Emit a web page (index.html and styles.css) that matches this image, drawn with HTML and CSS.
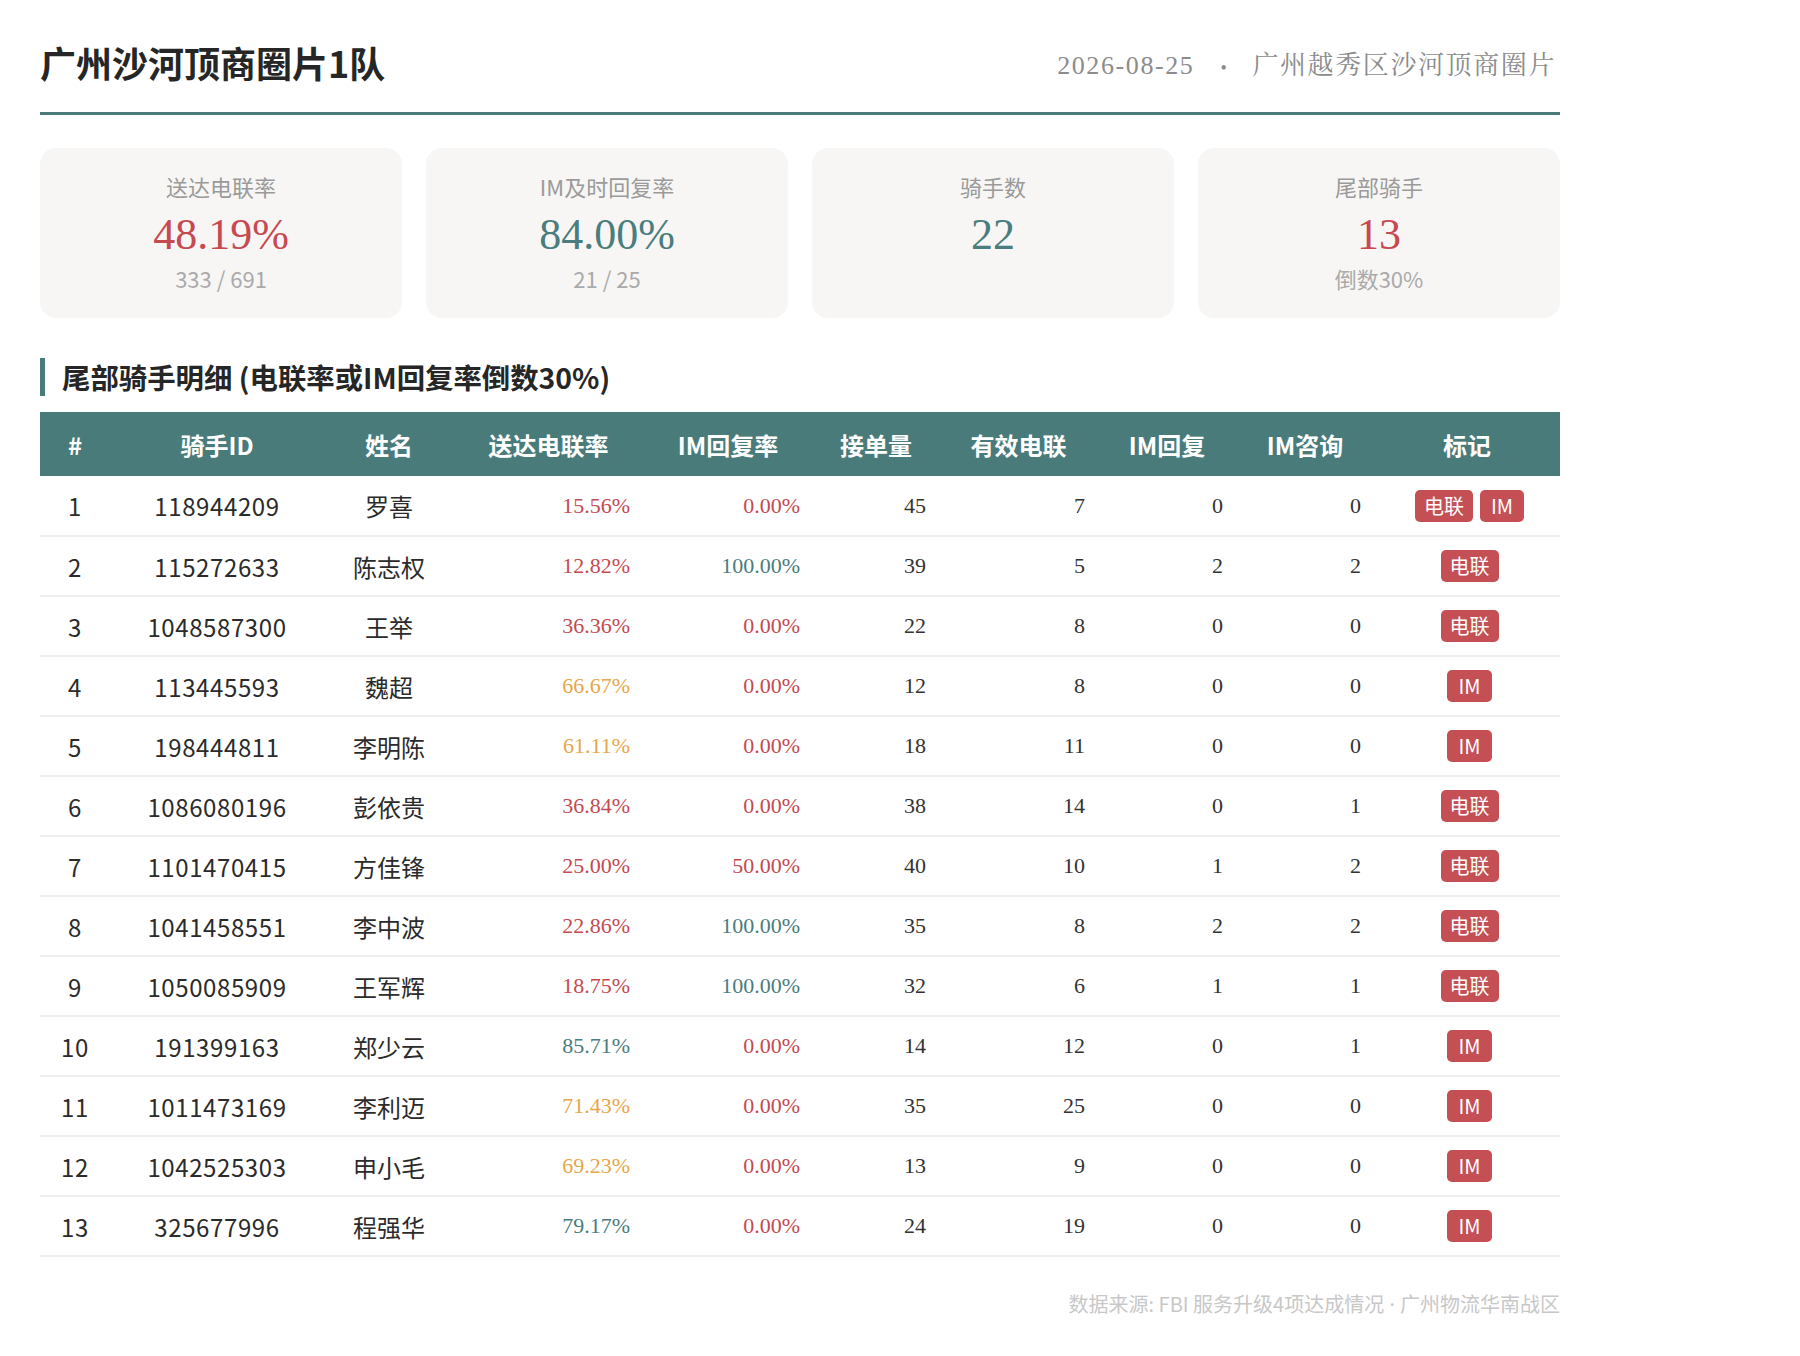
FILE: index.html
```html
<!DOCTYPE html>
<html lang="zh-CN">
<head>
<meta charset="utf-8">
<title>广州沙河顶商圈片1队</title>
<link rel="stylesheet" href="styles.css">
</head>
<body>
<div class="page">
  <header class="top">
    <h1 class="title">广州沙河顶商圈片1队</h1>
    <div class="meta"><span>2026-08-25</span><span class="dot">•</span><span>广州越秀区沙河顶商圈片</span></div>
  </header>

  <section class="cards">
    <div class="card">
      <div class="card-label">送达电联率</div>
      <div class="card-num red">48.19%</div>
      <div class="card-sub">333 / 691</div>
    </div>
    <div class="card">
      <div class="card-label">IM及时回复率</div>
      <div class="card-num teal">84.00%</div>
      <div class="card-sub">21 / 25</div>
    </div>
    <div class="card">
      <div class="card-label">骑手数</div>
      <div class="card-num teal">22</div>
    </div>
    <div class="card">
      <div class="card-label">尾部骑手</div>
      <div class="card-num red">13</div>
      <div class="card-sub">倒数30%</div>
    </div>
  </section>

  <h2 class="section-title">尾部骑手明细 (电联率或IM回复率倒数30%)</h2>

  <table class="grid">
    <colgroup>
      <col class="c-idx"><col class="c-id"><col class="c-name"><col class="c-rate"><col class="c-im">
      <col class="c-orders"><col class="c-eff"><col class="c-reply"><col class="c-ask"><col class="c-tag">
    </colgroup>
    <thead>
      <tr><th>#</th><th>骑手ID</th><th>姓名</th><th>送达电联率</th><th>IM回复率</th><th>接单量</th><th>有效电联</th><th>IM回复</th><th>IM咨询</th><th>标记</th></tr>
    </thead>
    <tbody>
      <tr><td class="sans idc">1</td><td class="sans idc">118944209</td><td class="sans">罗喜</td><td class="num red">15.56%</td><td class="num red">0.00%</td><td class="num">45</td><td class="num">7</td><td class="num">0</td><td class="num">0</td><td class="tags"><span class="tag">电联</span><span class="tag tag-im">IM</span></td></tr>
      <tr><td class="sans idc">2</td><td class="sans idc">115272633</td><td class="sans">陈志权</td><td class="num red">12.82%</td><td class="num teal">100.00%</td><td class="num">39</td><td class="num">5</td><td class="num">2</td><td class="num">2</td><td class="tags"><span class="tag">电联</span></td></tr>
      <tr><td class="sans idc">3</td><td class="sans idc">1048587300</td><td class="sans">王举</td><td class="num red">36.36%</td><td class="num red">0.00%</td><td class="num">22</td><td class="num">8</td><td class="num">0</td><td class="num">0</td><td class="tags"><span class="tag">电联</span></td></tr>
      <tr><td class="sans idc">4</td><td class="sans idc">113445593</td><td class="sans">魏超</td><td class="num orange">66.67%</td><td class="num red">0.00%</td><td class="num">12</td><td class="num">8</td><td class="num">0</td><td class="num">0</td><td class="tags"><span class="tag tag-im">IM</span></td></tr>
      <tr><td class="sans idc">5</td><td class="sans idc">198444811</td><td class="sans">李明陈</td><td class="num orange">61.11%</td><td class="num red">0.00%</td><td class="num">18</td><td class="num">11</td><td class="num">0</td><td class="num">0</td><td class="tags"><span class="tag tag-im">IM</span></td></tr>
      <tr><td class="sans idc">6</td><td class="sans idc">1086080196</td><td class="sans">彭依贵</td><td class="num red">36.84%</td><td class="num red">0.00%</td><td class="num">38</td><td class="num">14</td><td class="num">0</td><td class="num">1</td><td class="tags"><span class="tag">电联</span></td></tr>
      <tr><td class="sans idc">7</td><td class="sans idc">1101470415</td><td class="sans">方佳锋</td><td class="num red">25.00%</td><td class="num red">50.00%</td><td class="num">40</td><td class="num">10</td><td class="num">1</td><td class="num">2</td><td class="tags"><span class="tag">电联</span></td></tr>
      <tr><td class="sans idc">8</td><td class="sans idc">1041458551</td><td class="sans">李中波</td><td class="num red">22.86%</td><td class="num teal">100.00%</td><td class="num">35</td><td class="num">8</td><td class="num">2</td><td class="num">2</td><td class="tags"><span class="tag">电联</span></td></tr>
      <tr><td class="sans idc">9</td><td class="sans idc">1050085909</td><td class="sans">王军辉</td><td class="num red">18.75%</td><td class="num teal">100.00%</td><td class="num">32</td><td class="num">6</td><td class="num">1</td><td class="num">1</td><td class="tags"><span class="tag">电联</span></td></tr>
      <tr><td class="sans idc">10</td><td class="sans idc">191399163</td><td class="sans">郑少云</td><td class="num teal">85.71%</td><td class="num red">0.00%</td><td class="num">14</td><td class="num">12</td><td class="num">0</td><td class="num">1</td><td class="tags"><span class="tag tag-im">IM</span></td></tr>
      <tr><td class="sans idc">11</td><td class="sans idc">1011473169</td><td class="sans">李利迈</td><td class="num orange">71.43%</td><td class="num red">0.00%</td><td class="num">35</td><td class="num">25</td><td class="num">0</td><td class="num">0</td><td class="tags"><span class="tag tag-im">IM</span></td></tr>
      <tr><td class="sans idc">12</td><td class="sans idc">1042525303</td><td class="sans">申小毛</td><td class="num orange">69.23%</td><td class="num red">0.00%</td><td class="num">13</td><td class="num">9</td><td class="num">0</td><td class="num">0</td><td class="tags"><span class="tag tag-im">IM</span></td></tr>
      <tr><td class="sans idc">13</td><td class="sans idc">325677996</td><td class="sans">程强华</td><td class="num teal">79.17%</td><td class="num red">0.00%</td><td class="num">24</td><td class="num">19</td><td class="num">0</td><td class="num">0</td><td class="tags"><span class="tag tag-im">IM</span></td></tr>
    </tbody>
  </table>

  <footer class="foot">数据来源: FBI 服务升级4项达成情况<span class="mid"> · </span>广州物流华南战区</footer>
</div>
</body>
</html>
```
FILE: styles.css
```css
* { box-sizing: border-box; }

body {
  margin: 0;
  background: #ffffff;
  color: #333333;
  font-family: "Noto Sans CJK SC", "Noto Sans", sans-serif;
}

.page {
  width: 1600px;
  padding: 36px 40px 40px 40px;
}

.top {
  display: flex;
  justify-content: space-between;
  align-items: center;
  padding-bottom: 24px;
  border-bottom: 3px solid #4a7b7b;
}

.title {
  margin: 0;
  font-size: 36px;
  line-height: 52px;
  font-weight: 700;
  color: #262626;
}

.meta {
  font-family: "Liberation Serif", "Noto Serif CJK SC", "Noto Sans CJK SC", serif;
  font-size: 26px;
  letter-spacing: 1.6px;
  color: #8c8c8c;
  padding-right: 4px;
}

.meta .dot {
  margin: 0 24px 0 26px;
  font-size: 18px;
}

.cards {
  display: grid;
  grid-template-columns: repeat(4, 1fr);
  gap: 24px;
  margin-top: 33px;
}

.card {
  background: #f7f6f4;
  border-radius: 16px;
  height: 170px;
  padding-top: 23px;
  text-align: center;
}

.card-label {
  font-size: 22px;
  line-height: 30px;
  color: #9a9a9a;
}

.card-num {
  margin-top: 9px;
  font-family: "Liberation Serif", "Noto Serif CJK SC", serif;
  font-size: 44px;
  line-height: 50px;
}

.card-sub {
  margin-top: 3px;
  font-size: 22px;
  line-height: 30px;
  color: #aaaaaa;
}

.red { color: #c64a51; }
.teal { color: #4a7d7e; }
.orange { color: #e8a64a; }

.section-title {
  margin: 40px 0 16px 0;
  border-left: 5px solid #4a7b7b;
  padding-left: 17px;
  font-size: 28.4px;
  line-height: 38px;
  font-weight: 700;
  color: #262626;
}

.grid {
  width: 1520px;
  table-layout: fixed;
  border-collapse: collapse;
}

.c-idx { width: 70px; }
.c-id { width: 214px; }
.c-name { width: 130px; }
.c-rate { width: 189px; }
.c-im { width: 170px; }
.c-orders { width: 126px; }
.c-eff { width: 159px; }
.c-reply { width: 138px; }
.c-ask { width: 138px; }
.c-tag { width: 186px; }

.grid thead th {
  background: #4a7b7b;
  color: #ffffff;
  font-size: 24px;
  font-weight: 700;
  height: 64px;
  padding: 0;
  text-align: center;
}

.grid tbody td {
  height: 60px;
  padding: 0;
  border-bottom: 2px solid #eeeeee;
}

.grid td.sans {
  font-size: 24px;
  text-align: center;
  color: #2b2b2b;
}

.grid td.idc {
  letter-spacing: 0.6px;
}

.grid td.num {
  font-family: "Liberation Serif", "Noto Serif CJK SC", serif;
  font-size: 22px;
  text-align: right;
  padding-right: 13px;
}

.grid td.num:not(.red):not(.teal):not(.orange) { color: #333333; }

.grid td.tags {
  text-align: center;
  font-size: 0;
  padding-left: 5px;
}

.tag {
  display: inline-block;
  background: #c45055;
  color: #ffffff;
  font-size: 20px;
  line-height: 32px;
  height: 32px;
  padding: 0 9px;
  border-radius: 5px;
  margin: 0 3.5px;
  vertical-align: middle;
}

.tag-im {
  padding: 0 11px;
}

.foot {
  width: 1520px;
  margin-top: 32px;
  text-align: right;
  font-size: 20px;
  line-height: 30px;
  color: #c8c8c8;
}

.foot .mid {
  font-family: "Noto Sans", sans-serif;
}
```
